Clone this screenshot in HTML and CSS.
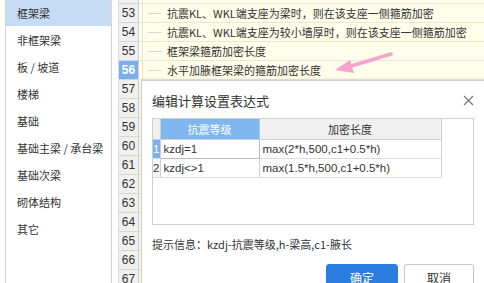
FILE: index.html
```html
<!DOCTYPE html>
<html lang="zh-CN">
<head>
    <meta charset="UTF-8">
    <meta name="viewport" content="width=device-width, initial-scale=1.0">
    <title>编辑计算设置表达式</title>
    <link rel="stylesheet" href="styles.css">
</head>
<body>
    <div class="side">
        <ul class="cats">
            <li class="on">框架梁</li>
            <li>非框架梁</li>
            <li>板 / 坡道</li>
            <li>楼梯</li>
            <li>基础</li>
            <li>基础主梁 / 承台梁</li>
            <li>基础次梁</li>
            <li>砌体结构</li>
            <li>其它</li>
        </ul>
    </div>

    <div class="grid">
        <div class="row"><span class="num">52</span><span class="gap"></span><span class="cell"></span></div>
        <div class="row"><span class="num">53</span><span class="gap"></span><span class="cell"><i class="tree"></i>抗震KL、WKL端支座为梁时，则在该支座一侧箍筋加密</span></div>
        <div class="row"><span class="num">54</span><span class="gap"></span><span class="cell"><i class="tree"></i>抗震KL、WKL端支座为较小墙厚时，则在该支座一侧箍筋加密</span></div>
        <div class="row"><span class="num">55</span><span class="gap"></span><span class="cell"><i class="tree"></i>框架梁箍筋加密长度</span></div>
        <div class="row"><span class="num sel">56</span><span class="gap"></span><span class="cell"><i class="tree"></i>水平加腋框架梁的箍筋加密长度</span></div>
        <div class="row"><span class="num">57</span><span class="gap"></span><span class="cell"></span></div>
        <div class="row"><span class="num">58</span><span class="gap"></span><span class="cell"></span></div>
        <div class="row"><span class="num">59</span><span class="gap"></span><span class="cell"></span></div>
        <div class="row"><span class="num">60</span><span class="gap"></span><span class="cell"></span></div>
        <div class="row"><span class="num">61</span><span class="gap"></span><span class="cell"></span></div>
        <div class="row"><span class="num">62</span><span class="gap"></span><span class="cell"></span></div>
        <div class="row"><span class="num">63</span><span class="gap"></span><span class="cell"></span></div>
        <div class="row"><span class="num">64</span><span class="gap"></span><span class="cell"></span></div>
        <div class="row"><span class="num">65</span><span class="gap"></span><span class="cell"></span></div>
        <div class="row"><span class="num">66</span><span class="gap"></span><span class="cell"></span></div>
        <div class="row"><span class="num">67</span><span class="gap"></span><span class="cell"></span></div>
    </div>

    <div class="dialog">
        <div class="dlg-head">
            <span class="dlg-title">编辑计算设置表达式</span>
            <svg class="close" width="11" height="11" viewBox="0 0 11 11"><path d="M1 1L10 10M10 1L1 10" stroke="#777" stroke-width="1.2" fill="none"/></svg>
        </div>

        <div class="expr-box">
            <table class="expr">
                <tr>
                    <th class="rn"></th>
                    <th class="hl">抗震等级</th>
                    <th>加密长度</th>
                </tr>
                <tr>
                    <td class="rn cur">1</td>
                    <td class="edit">kzdj=1</td>
                    <td>max(2*h,500,c1+0.5*h)</td>
                </tr>
                <tr>
                    <td class="rn">2</td>
                    <td>kzdj&lt;&gt;1</td>
                    <td>max(1.5*h,500,c1+0.5*h)</td>
                </tr>
            </table>
        </div>

        <p class="hint">提示信息：kzdj-抗震等级,h-梁高,c1-腋长</p>

        <div class="btns">
            <button class="ok">确定</button>
            <button>取消</button>
        </div>
    </div>

    <!-- 标注箭头 -->
    <svg class="arrow" width="70" height="30" viewBox="0 0 70 30">
        <path d="M61 6L18 19" stroke="#f7a3cb" stroke-width="3.5" stroke-linecap="round" fill="none"/>
        <polygon points="5,22 20,12 24,25" fill="#f7a3cb"/>
    </svg>
</body>
</html>
```

FILE: styles.css
```css
* { box-sizing: border-box; }
body { margin: 0; width: 484px; height: 283px; overflow: hidden; display: flex; position: relative; background: #fff; font-family: "Noto Sans CJK SC", "Liberation Sans", sans-serif; font-size: 11px; color: #333; }

.side { width: 118px; flex: none; height: 100%; padding-left: 5px; padding-right: 6px; }
.cats { list-style: none; margin: 0; padding: 0; height: 100%; border-left: 1px solid #d4d4d4; border-right: 1px solid #d4d4d4; }
.cats li { height: 26px; line-height: 26px; margin-bottom: 1px; padding-left: 11px; white-space: nowrap; }
.cats li.on { background: #c6dcf4; }

.grid { flex: 1; margin-top: -15px; border-left: 1px solid #dcdcdc; }
.row { display: flex; height: 19px; }
.num { width: 20px; flex: none; background: #f0f0f0; border-right: 1px solid #cfcfcf; border-bottom: 1px solid #d6d6d6; text-align: center; line-height: 18px; font-family: "Liberation Sans", sans-serif; font-size: 12px; color: #333; }
.num.sel { background: #78aff2; color: #fff; font-weight: bold; }
.gap { width: 4px; flex: none; background: #fffeea; border-right: 1px solid #e6e3cc; border-bottom: 1px solid #ebe8cf; }
.cell { flex: 1; background: #fffeea; border-bottom: 1px solid #ebe8cf; line-height: 18px; white-space: nowrap; overflow: hidden; display: flex; align-items: center; }
.tree { display: inline-block; width: 13px; height: 1px; background: #d8d8d8; margin: 0 6px 0 5px; flex: none; }

.dialog { position: absolute; left: 141px; top: 80px; width: 345px; height: 215px; background: #fff; border: 1px solid #cfcfcf; padding: 8px 10px 0 10px; box-shadow: 0 0 4px rgba(0,0,0,0.12); }
.dlg-head { display: flex; justify-content: space-between; align-items: center; height: 22px; }
.dlg-title { font-size: 13px; color: #333; }
.close { margin-right: 1px; }

.expr-box { margin-top: 7px; width: 322px; height: 107px; border: 1px solid #cfcfcf; }
.expr { border-collapse: collapse; font-size: 11px; }
.expr th { height: 20px; width: 182px; background: #f0f0f0; font-weight: normal; border-right: 1px solid #cfcfcf; border-bottom: 1px solid #cfcfcf; color: #333; }
.expr th.hl { width: 99px; background: #80b6ef; color: #fff; border-right-color: #a9cdf3; }
.expr th.rn, .expr td.rn { width: 7px; padding: 0; }
.expr td { height: 19px; padding: 0 3px; border-right: 1px solid #cfcfcf; border-bottom: 1px solid #dcdcdc; white-space: nowrap; font-family: "Liberation Sans", sans-serif; font-size: 11.5px; }
.expr td.rn { background: #f7f7f7; text-align: center; }
.expr td.rn.cur { background: #78aff2; color: #fff; }
.expr td.edit { border: 1px solid #b9b9b9; }

.hint { margin: 11px 0 0 0; line-height: 16px; }

.btns { display: flex; justify-content: flex-end; gap: 6px; margin-top: 12px; padding-right: 1px; }
.btns button { width: 70px; height: 26px; border: 1px solid #c8c8c8; border-radius: 3px; background: #fff; font-family: "Noto Sans CJK SC", sans-serif; font-size: 12px; color: #333; }
.btns .ok { width: 72px; background: #2b7ee0; border-color: #2b7ee0; color: #fff; }

.arrow { position: absolute; left: 330px; top: 48px; }
```
